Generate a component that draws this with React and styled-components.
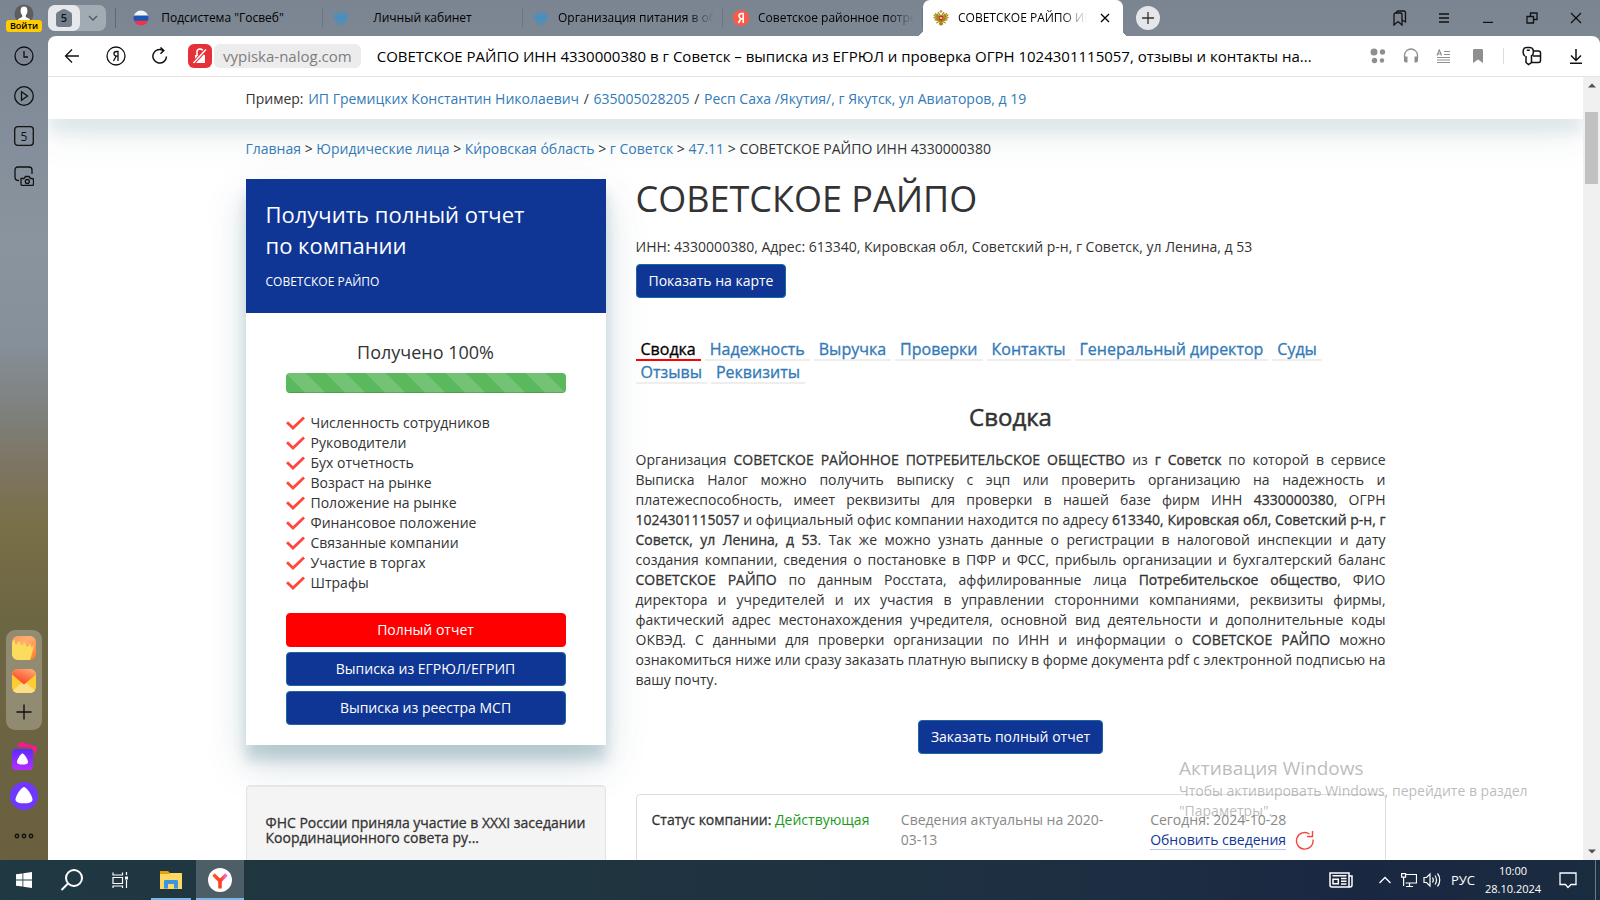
import React from 'react';
import styled, { createGlobalStyle, css } from 'styled-components';

const GlobalStyle = createGlobalStyle`
	* {
		box-sizing: border-box;
	}
	body {
		margin: 0;
		font-family: 'Open Sans', 'Noto Sans', sans-serif;
		font-size: 14px;
		line-height: 20px;
		color: #333;
		overflow: hidden;
	}
	button {
		font-family: inherit;
		padding: 0;
		border: 0;
		background: none;
		color: inherit;
		cursor: pointer;
	}
	a {
		color: #337ab7;
		text-decoration: none;
	}
	h1, h2, h3, p, ul {
		margin: 0;
		padding: 0;
	}
	svg {
		display: block;
		flex: none;
	}
`;

// the regular face thickened by a stroke, so it keeps its widths
const heavy = css`
	font-weight: 400;
	-webkit-text-stroke: thin;
`;

/* ---------- shell ---------- */

const Desktop = styled.div`
	position: relative;
	display: flex;
	flex-direction: column;
	height: 100vh;
`;

const Browser = styled.div`
	flex: 1;
	min-height: 0;
	display: flex;
	background: linear-gradient(
		#7b8591 0,
		#838d99 14%,
		#8a949f 28%,
		#86909a 40%,
		#7e8280 47%,
		#7d7563 54%,
		#796f48 61%,
		#6d6643 72%,
		#6a6040 100%
	);
`;

const SideBar = styled.aside`
	width: 48px;
	display: flex;
	flex-direction: column;
	align-items: center;
	padding: 4px 0 14px;
`;

const SideButton = styled.button`
	width: 32px;
	height: 28px;
	margin-bottom: 12px;
	display: flex;
	align-items: center;
	justify-content: center;
	color: #111;
`;

const Profile = styled.button`
	display: flex;
	flex-direction: column;
	align-items: center;
	margin-bottom: 10px;
`;

const Badge = styled.span`
	width: 36px;
	height: 12px;
	margin-top: -4px;
	border-radius: 3px;
	background: #fc0;
	color: #000;
	font-size: 9px;
	font-weight: 600;
	line-height: 12px;
`;

const SideBottom = styled.div`
	margin-top: auto;
	display: flex;
	flex-direction: column;
	align-items: center;
	gap: 12px;
`;

const Dock = styled.div`
	width: 36px;
	height: 100px;
	padding: 6px 0 8px;
	border-radius: 9px;
	background: rgba(255, 255, 255, 0.25);
	display: flex;
	flex-direction: column;
	align-items: center;
	justify-content: space-between;
`;

const DockButton = styled.button`
	display: block;
	color: #111;
`;

const MoreButton = styled.button`
	margin-top: 4px;
	color: #111;
`;

const Main = styled.div`
	flex: 1;
	min-width: 0;
	display: flex;
	flex-direction: column;
`;

/* ---------- tabs ---------- */

const TabStrip = styled.div`
	height: 36px;
	display: flex;
	align-items: center;
`;

const TabGroup = styled.div`
	display: flex;
	flex: none;
	width: 58px;
	height: 26px;
	border-radius: 7px;
	background: #a2aab4;
	margin-right: 9px;
`;

const GroupCount = styled.button`
	width: 32px;
	border-radius: 7px;
	background: #e6e8eb;
	display: flex;
	align-items: center;
	justify-content: center;
`;

const GroupMore = styled.button`
	flex: 1;
	display: flex;
	align-items: center;
	justify-content: center;
`;

const TabDivider = styled.span`
	width: 8px;
	height: 20px;
	border-left: 1px solid #5f6974;
`;

const Tab = styled.div`
	position: relative;
	width: 200px;
	height: ${(p) => (p.$active ? '36px' : '20px')};
	padding: 0 8px 0 10px;
	display: flex;
	align-items: center;
	gap: 9px;
	border-right: 1px solid ${(p) => (p.$active ? '#fff' : '#6c7681')};
	border-radius: ${(p) => (p.$active ? '7px 7px 0 0' : '0')};
	background: ${(p) => (p.$active ? '#fff' : 'none')};
	font-size: 12px;
	color: #000;
	${(p) =>
		p.$active &&
		css`
			&::before,
			&::after {
				content: '';
				position: absolute;
				bottom: 0;
				width: 7px;
				height: 7px;
				background: radial-gradient(circle at 0 0, transparent 7px, #fff 7px);
			}
			&::before {
				right: 100%;
			}
			&::after {
				left: 100%;
				transform: scaleX(-1);
			}
		`}
`;

const TabLabel = styled.span`
	flex: 1;
	min-width: 0;
	overflow: hidden;
	white-space: nowrap;
	${(p) =>
		p.$fade
			? css`
					mask-image: linear-gradient(to right, #000 calc(100% - 26px), transparent);
			  `
			: css`
					text-align: center;
					padding-right: 27px;
			  `}
`;

const NewTab = styled.button`
	width: 24px;
	height: 24px;
	margin-left: 13px;
	border-radius: 50%;
	background: #e4e6e9;
	display: flex;
	align-items: center;
	justify-content: center;
`;

const WindowButtons = styled.div`
	margin-left: auto;
	margin-right: 2px;
	display: flex;
`;

const WindowButton = styled.button`
	width: 44px;
	height: 36px;
	display: flex;
	align-items: center;
	justify-content: center;
	color: #111;
`;

/* ---------- toolbar ---------- */

const Pane = styled.div`
	flex: 1;
	min-height: 0;
	display: flex;
	flex-direction: column;
	background: #fff;
	border-radius: 8px 8px 0 0;
	overflow: hidden;
`;

const Toolbar = styled.div`
	height: 41px;
	flex: none;
	display: flex;
	align-items: center;
	padding: 0 2px;
	border-bottom: 1px solid #e3e3e3;
`;

const ToolButton = styled.button`
	width: ${(p) => p.$width || 44}px;
	height: 40px;
	flex: none;
	display: flex;
	align-items: center;
	justify-content: center;
	color: ${(p) => (p.$muted ? '#8f8f8f' : '#111')};
`;

const Security = styled.button`
	width: 24px;
	height: 24px;
	flex: none;
	margin: 0 2px 0 6px;
	border-radius: 6px;
	background: #e5323a;
	display: flex;
	align-items: center;
	justify-content: center;
`;

const Domain = styled.span`
	flex: none;
	height: 24px;
	padding: 0 9px;
	border-radius: 6px;
	background: #ececec;
	color: #7d7d7d;
	font-size: 15px;
	line-height: 24px;
`;

const PageTitle = styled.span`
	flex: 1;
	min-width: 0;
	margin-left: 16px;
	overflow: hidden;
	text-overflow: ellipsis;
	white-space: nowrap;
	color: #000;
	font-size: 15px;
	line-height: 24px;
`;

const ToolIcons = styled.div`
	margin-left: auto;
	display: flex;
	align-items: center;
`;

const ToolDivider = styled.span`
	width: 1px;
	height: 16px;
	margin: 0 6px;
	background: #ddd;
`;

/* ---------- page ---------- */

const Viewport = styled.div`
	flex: 1;
	min-height: 0;
	display: flex;
`;

const Page = styled.main`
	flex: 1;
	min-width: 0;
	overflow: hidden;
`;

const Scrollbar = styled.div`
	width: 17px;
	background: #f0f0f0;
	display: flex;
	flex-direction: column;
	align-items: center;
	padding: 6px 0;
`;

const Thumb = styled.div`
	width: 13px;
	height: 72px;
	margin: 24px 0 auto;
	background: #c1c1c1;
`;

const Container = styled.div`
	max-width: 1170px;
	margin: 0 auto;
	padding: 0 15px;
`;

const ExampleBar = styled.div`
	height: 42px;
	padding-top: 12px;
	box-shadow: 0 19px 38px rgba(0, 72, 93, 0.08), 0 15px 12px rgba(0, 72, 93, 0.07);
	a {
		margin: 0 1px;
	}
`;

const Crumbs = styled.nav`
	padding: 20px 0;
`;

const Columns = styled.div`
	display: grid;
	grid-template-columns: 360px minmax(0, 1fr);
	gap: 30px;
	align-items: start;
`;

const ReportCard = styled.section`
	margin-bottom: 40px;
	background: #fff;
	box-shadow: 0 19px 38px rgba(0, 72, 93, 0.18), 0 15px 12px rgba(0, 72, 93, 0.17);
`;

const ReportHead = styled.header`
	padding: 20px 20px 21px;
	background: #103695;
	color: #fff;
`;

const ReportTitle = styled.h2`
	font-size: 22px;
	font-weight: 400;
	line-height: 31px;
`;

const ReportName = styled.p`
	margin-top: 11px;
	font-size: 12px;
`;

const ReportBody = styled.div`
	padding: 25px 40px 20px;
`;

const Percent = styled.label`
	display: block;
	text-align: center;
	font-size: 18px;
	line-height: 28px;
`;

const Bar = styled.progress`
	appearance: none;
	display: block;
	width: 100%;
	height: 20px;
	margin: 7px 0 20px;
	border: 0;
	border-radius: 4px;
	overflow: hidden;
	&::-webkit-progress-bar {
		background: #f5f5f5;
	}
	&::-webkit-progress-value {
		background: linear-gradient(
				45deg,
				rgba(255, 255, 255, 0.15) 25%,
				transparent 25%,
				transparent 50%,
				rgba(255, 255, 255, 0.15) 50%,
				rgba(255, 255, 255, 0.15) 75%,
				transparent 75%
			)
			0 0 / 40px 40px #5cb85c;
		box-shadow: inset 0 -1px 0 rgba(0, 0, 0, 0.15);
	}
`;

const CheckList = styled.ul`
	list-style: none;
	margin-bottom: 20px;
	li {
		display: flex;
		align-items: center;
		gap: 6px;
		height: 20px;
	}
`;

const Button = styled.button`
	height: 34px;
	padding: 0 12px;
	border: 1px solid ${(p) => (p.$red ? '#f00' : '#2065a0')};
	border-radius: 4px;
	background: ${(p) => (p.$red ? '#f00' : '#103695')};
	color: #fff;
	font-size: 14px;
	line-height: 20px;
	white-space: nowrap;
`;

const ButtonStack = styled.div`
	display: grid;
	gap: 5px;
`;

const NewsCard = styled.section`
	height: 200px;
	padding: 29px 19px;
	border: 1px solid #e3e3e3;
	border-radius: 4px;
	background: #f4f4f4;
	box-shadow: inset 0 1px 1px rgba(0, 0, 0, 0.05);
`;

const NewsTitle = styled.h3`
	${heavy}
	font-size: 14px;
	line-height: 15px;
`;

const CompanyName = styled.h1`
	font-size: 36px;
	font-weight: 400;
	line-height: 40px;
`;

const Address = styled.p`
	margin: 18px 0 7px;
`;

const Anchors = styled.nav`
	display: flex;
	flex-wrap: wrap;
	column-gap: 4px;
	margin: 40px 0 20px;
`;

const Anchor = styled.a`
	${heavy}
	padding: 2px 5px 0;
	border-bottom: 2px solid ${(p) => (p.$current ? '#f00' : '#eee')};
	color: ${(p) => (p.$current ? '#000' : '#337ab7')};
	font-size: 16px;
	line-height: 19px;
`;

const SectionTitle = styled.h2`
	${heavy}
	text-align: center;
	font-size: 24px;
	line-height: 26px;
`;

const Summary = styled.p`
	margin: 20px 0 30px;
	text-align: justify;
	b {
		${heavy}
	}
`;

const Centered = styled.div`
	display: flex;
	justify-content: center;
`;

const Status = styled.section`
	height: 200px;
	margin-top: 40px;
	padding: 15px;
	border: 1px solid #ddd;
	border-radius: 4px;
	display: grid;
	grid-template-columns: repeat(3, 1fr);
	column-gap: 30px;
	color: #888;
	b {
		${heavy}
		color: #333;
	}
	em {
		color: #1a9a1a;
		font-style: normal;
	}
`;

const Refresh = styled.div`
	display: flex;
	gap: 9px;
	a {
		height: 20px;
		border-bottom: 1px solid #b9c7f0;
		color: #103695;
	}
`;

const Watermark = styled.div`
	position: absolute;
	right: 52px;
	bottom: 79px;
	width: 369px;
	color: rgba(120, 120, 120, 0.5);
	pointer-events: none;
	strong {
		display: block;
		font-size: 19px;
		font-weight: 400;
		line-height: 26px;
	}
`;

/* ---------- taskbar ---------- */

const Taskbar = styled.footer`
	height: 40px;
	flex: none;
	display: flex;
	background: linear-gradient(to right, #203841, #1f353f 35%, #1d2e42 70%, #1a2741 85%, #1a2c40);
	color: #fff;
`;

const TaskButton = styled.button`
	width: ${(p) => p.$width || 48}px;
	display: flex;
	align-items: center;
	justify-content: center;
	background: ${(p) => (p.$active ? '#4d5e67' : 'none')};
	border-bottom: 2px solid ${(p) => (p.$active || p.$open ? '#76b9ed' : 'transparent')};
	padding-top: 2px;
	${(p) => p.$open && 'margin: 0 5px 0 7px;'}
`;

const Tray = styled.div`
	margin-left: auto;
	display: flex;
	align-items: center;
`;

const TrayButton = styled.button`
	width: ${(p) => p.$width}px;
	height: 40px;
	display: flex;
	align-items: center;
	justify-content: center;
	font-size: 13px;
`;

const Clock = styled.time`
	width: 56px;
	text-align: center;
	font-size: 11px;
	line-height: 18px;
	white-space: nowrap;
`;

const ShowDesktop = styled.button`
	width: 5px;
	height: 40px;
	border-left: 1px solid #6d7886;
`;

/* ---------- icons ---------- */

const Line = ({ size = 20, w = 1.3, children, ...rest }) => (
	<svg width={size} height={size} viewBox={`0 0 ${size} ${size}`} fill="none" stroke="currentColor" strokeWidth={w} {...rest}>
		{children}
	</svg>
);

const Avatar = () => (
	<svg width="20" height="20" viewBox="0 0 20 20">
		<circle cx="10" cy="10" r="9.5" fill="#5d5d5d" />
		<ellipse cx="10" cy="7" rx="3.4" ry="4.4" fill="#fff" />
		<path d="M8.2 10h3.6v3l4 2v4H4.200v-4l4-2z" fill="#fff" />
	</svg>
);

const wing = 'M6.800 8.500L4.500 4.200M6.500 9L2.500 3.600M6.300 9.600L1.200 5M6.300 10L1 7.400M6.500 10.500L2 9.800M6.800 11L3.800 12.800M7.300 5.500L5.300 2.600';

const Eagle = ({ body, shield }) => (
	<svg width="16" height="16" viewBox="0 0 16 16">
		<g stroke={body} strokeWidth="1.3" strokeLinecap="round" fill="none">
			<path d={wing} />
			<path d={wing} transform="matrix(-1 0 0 1 16 0)" />
			<path d="M7 1.200h2M8 0.600v2" strokeWidth="1" />
		</g>
		<path d="M6.500 5h3l1 4-1 3 .8 2.200L8 15.800l-2.300-1.600.8-2.200-1-3z" fill={body} />
		{shield && <path fill={shield} d="M6.300 6h3.400v3.500L8 11 6.300 9.500z" />}
		{shield && <path fill="#fff" d="M7.300 7h1.400v2H7.300z" />}
	</svg>
);

const Flag = () => (
	<svg width="16" height="16" viewBox="0 0 16 16">
		<clipPath id="flagRound">
			<circle cx="8" cy="8" r="7.500" />
		</clipPath>
		<g clipPath="url(#flagRound)">
			<path fill="#f4f4f8" d="M0 0h16v6H0z" />
			<path fill="#1c57b5" d="M0 5.500h16v5.500H0z" />
			<path fill="#ef3348" d="M0 10.700h16V16H0z" />
		</g>
	</svg>
);

const YaRound = () => (
	<svg width="16" height="16" viewBox="0 0 16 16">
		<circle cx="8" cy="8" r="8" fill="#fc5a45" />
		<path d="M10.200 13V3.500H8.700c-1.700 0-2.700 1-2.700 2.500 0 1.300.7 2 1.800 2.700L5.400 13M8 8.800h2" fill="none" stroke="#fff" strokeWidth="1.600" />
	</svg>
);

const Check = () => (
	<svg width="19" height="14" viewBox="0 0 19 14">
		<path d="M1 6.200l6 5.800L18 1.500" fill="none" stroke="#ff473d" strokeWidth="2.800" />
	</svg>
);

const NotesIcon = () => (
	<svg width="24" height="24" viewBox="0 0 24 24">
		<defs>
			<linearGradient id="notes" x1="0" y1="0" x2="1" y2="1">
				<stop offset="0" stopColor="#ff9a5a" />
				<stop offset="0.400" stopColor="#ffb070" />
				<stop offset="1" stopColor="#ff7a2a" />
			</linearGradient>
		</defs>
		<rect width="24" height="24" rx="6" fill="url(#notes)" />
		<path
			d="M0 7l1-2.500c.8-.4 1.500-.2 2 .2C2.500 7 3 8.200 4.300 8.200S6 7 6 5.500l2.500.6C8 8 8.500 9.300 9.800 9.300s1.700-1 1.700-2.500l2.500.6c-.5 2 0 3.200 1.300 3.200S17 9.500 17 8l2 .6c-.3 1.700 0 2.700 1 2.700s1-.5 1.200-2.500c.5.3.800.8.700 1.400L18.500 23c-.2.700-.5 1-1 1H6a6 6 0 0 1-6-6z"
			fill="#fbdc5c"
		/>
	</svg>
);

const MailIcon = () => (
	<svg width="24" height="24" viewBox="0 0 24 24">
		<defs>
			<linearGradient id="flap" x1="1" y1="0" x2="0.300" y2="1">
				<stop offset="0" stopColor="#ffb27c" />
				<stop offset="1" stopColor="#fb3f1c" />
			</linearGradient>
		</defs>
		<rect width="24" height="24" rx="6" fill="#ffcc33" />
		<path d="M1 21.500L12 12l11 9.500c-1 1.600-3 2.500-5 2.500H6c-2 0-4-1-5-2.500z" fill="#ffdf85" />
		<path d="M0 5.500C.3 2.500 3 0 6 0h12c3 0 5.700 2.500 6 5.500L12 15.500z" fill="url(#flap)" />
	</svg>
);

const AlicePro = () => (
	<svg width="28" height="28" viewBox="0 0 28 28">
		<defs>
			<linearGradient id="pro" x1="0" y1="0" x2="0" y2="1">
				<stop offset="0" stopColor="#5a2cff" />
				<stop offset="1" stopColor="#b82cff" />
			</linearGradient>
		</defs>
		<path d="M7.500 5L9 1.500C9.500.3 10.500 0 12 .3l13 4c1.500.500 2.200 1.500 1.800 3L25 14c-.5-4-1.500-7.500-5-8.500z" fill="#ff1493" />
		<rect x="2" y="7" width="21" height="21" rx="4" fill="url(#pro)" />
		<path d="M12.500 11.500c1.700 0 5.500 6 5.500 8.500 0 2-2.500 2.500-5.500 2.500S7 22 7 20c0-2.500 3.800-8.500 5.500-8.500z" fill="#fff" />
	</svg>
);

const Alice = () => (
	<svg width="28" height="28" viewBox="0 0 28 28">
		<circle cx="14" cy="14" r="14" fill="#7038ff" />
		<path d="M14 5c2.500 0 8.500 8.800 8.500 12.500 0 3-4 3.800-8.500 3.800s-8.500-.8-8.500-3.800C5.500 13.800 11.500 5 14 5z" fill="#fff" />
	</svg>
);

const Folder = () => (
	<svg width="22" height="20" viewBox="0 0 22 20">
		<path d="M0 1h8l2 2h12v4H0z" fill="#e5a00d" />
		<path d="M0 4h9l2-1h11v16H0z" fill="#ffd765" />
		<path d="M4 18.500v-7c0-1 .5-1.500 1.500-1.500h11c1 0 1.500.5 1.500 1.500v7h-4V14H8v4.500z" fill="#3a96dd" />
	</svg>
);

const YandexBrowser = () => (
	<svg width="24" height="24" viewBox="0 0 24 24">
		<defs>
			<linearGradient id="yb" x1="0" y1="0" x2="1" y2="0">
				<stop offset="0" stopColor="#ff5a2a" />
				<stop offset="0.550" stopColor="#fb3f1c" />
				<stop offset="1" stopColor="#f26ee8" />
			</linearGradient>
		</defs>
		<circle cx="12" cy="12" r="12" fill="#fff" />
		<path d="M5.500 6.500L12 13v7.500M12 13l6.500-6.500" fill="none" stroke="url(#yb)" strokeWidth="3.600" strokeLinejoin="round" />
	</svg>
);

/* ---------- data ---------- */

const tabs = [
	{ icon: <Flag />, title: 'Подсистема "Госвеб"' },
	{ icon: <Eagle body="#4a90bd" />, title: 'Личный кабинет' },
	{ icon: <Eagle body="#4a90bd" />, title: 'Организация питания в общеобразовательных', fade: true },
	{ icon: <YaRound />, title: 'Советское районное потребительское', fade: true },
];

const checks = [
	'Численность сотрудников',
	'Руководители',
	'Бух отчетность',
	'Возраст на рынке',
	'Положение на рынке',
	'Финансовое положение',
	'Связанные компании',
	'Участие в торгах',
	'Штрафы',
];

const anchors = [
	'Сводка',
	'Надежность',
	'Выручка',
	'Проверки',
	'Контакты',
	'Генеральный директор',
	'Суды',
	'Отзывы',
	'Реквизиты',
];

/* ---------- parts ---------- */

const Side = () => (
	<SideBar>
		<Profile>
			<Avatar />
			<Badge>Войти</Badge>
		</Profile>
		<SideButton aria-label="История">
			<Line>
				<circle cx="10" cy="10" r="9" />
				<path d="M10 5v6h4" />
			</Line>
		</SideButton>
		<SideButton aria-label="Видео">
			<Line>
				<circle cx="10" cy="10" r="9.300" />
				<path d="M7.500 5.800v8.400l6-4.200z" />
			</Line>
		</SideButton>
		<SideButton aria-label="Вкладки">
			<Line>
				<rect x="0.700" y="0.700" width="18.600" height="18.600" rx="3" />
				<text x="10" y="14.500" textAnchor="middle" fontSize="12" fill="#111" stroke="none">
					5
				</text>
			</Line>
		</SideButton>
		<SideButton aria-label="Скриншот">
			<Line>
				<path d="M5 14.500c-3 0-4-1-4-3.500V4c0-2 1-3 3-3h11c2 0 3 1 3 3v4" />
				<path d="M7 12.500h3l1.500-2h3.500l1.500 2H18c1 0 1.500.5 1.500 1.500v4c0 1-.5 1.500-1.500 1.500H8.500c-1 0-1.500-.5-1.500-1.500z" />
				<circle cx="13.300" cy="15.500" r="2" />
			</Line>
		</SideButton>
		<SideBottom>
			<Dock>
				<DockButton aria-label="Заметки">
					<NotesIcon />
				</DockButton>
				<DockButton aria-label="Почта">
					<MailIcon />
				</DockButton>
				<DockButton aria-label="Добавить">
					<Line w={1.400}>
						<path d="M10 2.500v15M2.500 10h15" />
					</Line>
				</DockButton>
			</Dock>
			<DockButton aria-label="Алиса Про">
				<AlicePro />
			</DockButton>
			<DockButton aria-label="Алиса">
				<Alice />
			</DockButton>
			<MoreButton aria-label="Ещё">
				<Line w={1.400}>
					<circle cx="3" cy="10" r="1.700" />
					<circle cx="10" cy="10" r="1.700" />
					<circle cx="17" cy="10" r="1.700" />
				</Line>
			</MoreButton>
		</SideBottom>
	</SideBar>
);

const TabItem = ({ icon, title, fade }) => (
	<Tab>
		{icon}
		<TabLabel $fade={fade}>{title}</TabLabel>
	</Tab>
);

const Tabs = () => (
	<TabStrip>
		<TabGroup>
			<GroupCount aria-label="Группа вкладок">
				<svg width="18" height="20" viewBox="0 0 18 20">
					<path d="M1 7c0-1.500.5-2.300 1.700-3L7 1.500c1.300-.7 2.700-.7 4 0L15.300 4C16.500 4.700 17 5.500 17 7v9c0 2-1 3-3 3H4c-2 0-3-1-3-3z" fill="#737e8a" />
					<text x="9" y="14" textAnchor="middle" fontSize="11" fontWeight="600" fill="#111">
						5
					</text>
				</svg>
			</GroupCount>
			<GroupMore aria-label="Список групп">
				<Line size={10} stroke="#4e565f">
					<path d="M1 3l4 4 4-4" />
				</Line>
			</GroupMore>
		</TabGroup>
		<TabDivider />
		{tabs.map((tab) => (
			<TabItem key={tab.title} {...tab} />
		))}
		<Tab $active>
			<Eagle body="#a88a1c" shield="#c22" />
			<TabLabel $fade>СОВЕТСКОЕ РАЙПО ИНН 4330000380</TabLabel>
			<Line size={18}>
				<path d="M5 5l8 8M13 5l-8 8" />
			</Line>
		</Tab>
		<NewTab aria-label="Новая вкладка">
			<Line size={12}>
				<path d="M6 0v12M0 6h12" />
			</Line>
		</NewTab>
		<WindowButtons>
			<WindowButton aria-label="Коллекции">
				<Line size={16}>
					<path d="M2 4.500C2 3.500 2.500 3 3.500 3h5c1 0 1.500.500 1.500 1.500V15l-4-3.500L2 15z" />
					<path d="M4.500 3c0-1.300.5-2 1.800-2h5.400c1.200 0 1.800.700 1.800 1.800V12L10 10" />
				</Line>
			</WindowButton>
			<WindowButton aria-label="Меню">
				<Line size={10}>
					<path d="M0 1h10M0 5h10M0 9h10" />
				</Line>
			</WindowButton>
			<WindowButton aria-label="Свернуть">
				<Line size={10}>
					<path d="M0 9.400h10" />
				</Line>
			</WindowButton>
			<WindowButton aria-label="Развернуть">
				<Line size={12}>
					<path d="M1 4.500h6.500V11H1zM4.500 4.500V1H11v6.500H7.500" />
				</Line>
			</WindowButton>
			<WindowButton aria-label="Закрыть">
				<Line size={12}>
					<path d="M1 1l10 10M11 1L1 11" />
				</Line>
			</WindowButton>
		</WindowButtons>
	</TabStrip>
);

const AddressBar = () => (
	<Toolbar>
		<ToolButton aria-label="Назад">
			<Line size={16}>
				<path d="M15 8H1.500M8 1.500L1.500 8 8 14.500" />
			</Line>
		</ToolButton>
		<ToolButton aria-label="Яндекс">
			<Line size={20}>
				<circle cx="10" cy="10" r="9" />
				<path d="M12 15V5.500h-1.500c-1.700 0-2.600.9-2.600 2.300 0 1.500.9 2 2 2.400H12M10 10.500L7.500 15" />
			</Line>
		</ToolButton>
		<ToolButton aria-label="Обновить">
			<Line size={18} w={1.500}>
				<path d="M15.500 9.500a6.800 6.800 0 1 1-3.200-6M9.500 0.500l3.300 3-3.300 3.300" />
			</Line>
		</ToolButton>
		<Security aria-label="Соединение не защищено">
			<svg width="16" height="18" viewBox="0 0 16 18">
				<path d="M3 8h10v8H3z" fill="#fff" />
				<path d="M5 8V5c0-4 6-4 6 0v3" fill="none" stroke="#fff" strokeWidth="1.500" />
				<path d="M1.500 16L13.500 3" stroke="#e5323a" strokeWidth="3.500" />
				<path d="M1.500 16L14 2.500" stroke="#fff" strokeWidth="1.400" />
			</svg>
		</Security>
		<Domain>vypiska-nalog.com</Domain>
		<PageTitle>
			СОВЕТСКОЕ РАЙПО ИНН 4330000380 в г Советск – выписка из ЕГРЮЛ и проверка ОГРН 1024301115057, отзывы и контакты на...
		</PageTitle>
		<ToolIcons>
			<ToolButton $width={34} $muted aria-label="Расширения">
				<svg width="16" height="16" viewBox="0 0 16 16" fill="currentColor">
					<circle cx="4" cy="4" r="3.500" />
					<circle cx="12.500" cy="4" r="2.700" />
					<circle cx="4.500" cy="12.500" r="2.700" />
					<circle cx="12" cy="12.500" r="2.200" />
				</svg>
			</ToolButton>
			<ToolButton $width={32} $muted aria-label="Слушать">
				<Line size={16}>
					<path d="M1.500 10V7.500a6.500 6.500 0 0 1 13 0V10" />
					<path d="M1 8.500h3.500v6H3c-1.500 0-2-1-2-2zM15 8.500h-3.500v6H13c1.500 0 2-1 2-2z" fill="currentColor" stroke="none" />
				</Line>
			</ToolButton>
			<ToolButton $width={32} $muted aria-label="Режим чтения">
				<Line size={14} w={1.200}>
					<path d="M8 2.500h6M8 5.500h6M1 8.500h13M1 11h13M1 13.500h13" />
					<path d="M1 6.500L3.300 1l2.300 5.500M1.700 5h3.200" />
				</Line>
			</ToolButton>
			<ToolButton $width={38} $muted aria-label="В закладки">
				<svg width="12" height="16" viewBox="0 0 12 16" fill="currentColor">
					<path d="M1 2.500C1 1.500 1.500 1 2.500 1h7c1 0 1.500.5 1.500 1.500V15l-5-3.500L1 15z" />
				</svg>
			</ToolButton>
			<ToolDivider />
			<ToolButton aria-label="Пароли">
				<Line size={20} w={1.500}>
					<path d="M3 10C0.500 8.500 1 5.500 1.500 3.500 2 2 3 1.500 5 1.500h2.500c2 0 3 .5 3.500 2 .5 2 1 5-1.500 6.500v6.500L6.500 18.500 4 16.500V10M4.800 4.200h3" />
					<path d="M11 5h5.500c1.500 0 2 .700 2 2v7.500c0 1.300-.5 2-2 2H10M11 10h7.500" />
				</Line>
			</ToolButton>
			<ToolButton aria-label="Загрузки">
				<Line size={16} w={1.500}>
					<path d="M8 1v11M3 7.500L8 12.500l5-5M2 15.200h12" />
				</Line>
			</ToolButton>
		</ToolIcons>
	</Toolbar>
);

const Report = () => (
	<ReportCard>
		<ReportHead>
			<ReportTitle>
				Получить полный отчет
				<br />
				по компании
			</ReportTitle>
			<ReportName>СОВЕТСКОЕ РАЙПО</ReportName>
		</ReportHead>
		<ReportBody>
			<Percent htmlFor="ready">Получено 100%</Percent>
			<Bar id="ready" value="100" max="100" />
			<CheckList>
				{checks.map((item) => (
					<li key={item}>
						<Check />
						{item}
					</li>
				))}
			</CheckList>
			<ButtonStack>
				<Button $red>Полный отчет</Button>
				<Button>Выписка из ЕГРЮЛ/ЕГРИП</Button>
				<Button>Выписка из реестра МСП</Button>
			</ButtonStack>
		</ReportBody>
	</ReportCard>
);

const Company = () => (
	<article>
		<CompanyName>СОВЕТСКОЕ РАЙПО</CompanyName>
		<Address>ИНН: 4330000380, Адрес: 613340, Кировская обл, Советский р-н, г Советск, ул Ленина, д 53</Address>
		<Button>Показать на карте</Button>
		<Anchors>
			{anchors.map((name, i) => (
				<Anchor key={name} href="#" $current={i === 0}>
					{name}
				</Anchor>
			))}
		</Anchors>
		<SectionTitle>Сводка</SectionTitle>
		<Summary>
			Организация <b>СОВЕТСКОЕ РАЙОННОЕ ПОТРЕБИТЕЛЬСКОЕ ОБЩЕСТВО</b> из <b>г Советск</b> по которой в сервисе
			Выписка Налог можно получить выписку с эцп или проверить организацию на надежность и
			платежеспособность, имеет реквизиты для проверки в нашей базе фирм ИНН <b>4330000380</b>, ОГРН{' '}
			<b>1024301115057</b> и официальный офис компании находится по адресу{' '}
			<b>613340, Кировская обл, Советский р-н, г Советск, ул Ленина, д 53</b>. Так же можно узнать данные о
			регистрации в налоговой инспекции и дату создания компании, сведения о постановке в ПФР и ФСС, прибыль
			организации и бухгалтерский баланс <b>СОВЕТСКОЕ РАЙПО</b> по данным Росстата, аффилированные лица{' '}
			<b>Потребительское общество</b>, ФИО директора и учредителей и их участия в управлении сторонними
			компаниями, реквизиты фирмы, фактический адрес местонахождения учредителя, основной вид деятельности и
			дополнительные коды ОКВЭД. С данными для проверки организации по ИНН и информации о{' '}
			<b>СОВЕТСКОЕ РАЙПО</b> можно ознакомиться ниже или сразу заказать платную выписку в форме документа pdf
			с электронной подписью на вашу почту.
		</Summary>
		<Centered>
			<Button>Заказать полный отчет</Button>
		</Centered>
		<Status>
			<div>
				<b>Статус компании:</b> <em>Действующая</em>
			</div>
			<div>Сведения актуальны на 2020-03-13</div>
			<div>
				Сегодня: 2024-10-28
				<Refresh>
					<a href="#">Обновить сведения</a>
					<Line size={20} w={1.400} stroke="#f2473d">
						<path d="M18 9.500A8.300 8.300 0 1 1 14.500 4M17.500 1v5.500H12" />
					</Line>
				</Refresh>
			</div>
		</Status>
	</article>
);

const System = () => (
	<Taskbar>
		<TaskButton aria-label="Пуск">
			<svg width="16" height="16" viewBox="0 0 16 16" fill="#fff">
				<path d="M0 2.300L6.500 1.400v6.200H0zM7.300 1.300L16 0v7.600H7.300zM0 8.400h6.500v6.200L0 13.700zM7.300 8.400H16V16l-8.700-1.300z" />
			</svg>
		</TaskButton>
		<TaskButton aria-label="Поиск">
			<Line size={24} w={2}>
				<circle cx="14" cy="10" r="8" />
				<path d="M8 15.500L1.500 22" />
			</Line>
		</TaskButton>
		<TaskButton aria-label="Представление задач">
			<Line size={16} w={1.200}>
				<path d="M1 .5v2.500h9.500V.5M1 5.500h9.500v6H1zM1 16v-2h9.500v2M14.500 0v3M14.500 8v8" />
				<path d="M13 4.500h3v3h-3z" fill="currentColor" stroke="none" />
			</Line>
		</TaskButton>
		<TaskButton $open $width={40} aria-label="Проводник">
			<Folder />
		</TaskButton>
		<TaskButton $active aria-label="Яндекс Браузер">
			<YandexBrowser />
		</TaskButton>
		<Tray>
			<TrayButton $width={68} aria-label="Новости">
				<svg width="24" height="16" viewBox="0 0 24 16" fill="none" stroke="#fff" strokeWidth="1.500">
					<path d="M1 1h19v14H3c-1.500 0-2-.5-2-2zM20 4h3v9c0 1.500-.5 2-2 2h-3M3.500 3.800h14M12 6.500h5.500M12 9.300h5.500M12 12h5.500M4 7.200h5.300v4.600H4z" />
				</svg>
			</TrayButton>
			<TrayButton $width={20} aria-label="Скрытые значки">
				<Line size={12} w={1.300}>
					<path d="M0.500 9L6 3.500 11.500 9" />
				</Line>
			</TrayButton>
			<TrayButton $width={28} aria-label="Сеть">
				<Line size={16} w={1.200}>
					<path d="M5 2.500h10.500v8.500H4.500M8.500 11v3.500M5 14.500h7M.6 1.600h4v3.500h-4zM2.600 5v9" />
				</Line>
			</TrayButton>
			<TrayButton $width={18} aria-label="Громкость">
				<Line size={18} w={1.200}>
					<path d="M1 6.500h2.500L7 3v12l-3.500-3.500H1zM9.500 6.500c1 1.500 1 3.500 0 5M12 4.500c2 2.500 2 6.500 0 9M14.500 2.500c3 3.500 3 9.500 0 13" />
				</Line>
			</TrayButton>
			<TrayButton $width={44}>РУС</TrayButton>
			<Clock>
				10:00
				<br />
				28.10.2024
			</Clock>
			<TrayButton $width={54} aria-label="Уведомления">
				<Line size={18} w={1.300}>
					<path d="M1 2h16v11.500h-5L9 16.500l-2.500-3H1z" />
				</Line>
			</TrayButton>
			<ShowDesktop aria-label="Свернуть все окна" />
		</Tray>
	</Taskbar>
);

const App = () => (
	<Desktop>
		<GlobalStyle />
		<Browser>
			<Side />
			<Main>
				<Tabs />
				<Pane>
					<AddressBar />
					<Viewport>
						<Page>
							<ExampleBar>
								<Container>
									Пример: <a href="#">ИП Гремицких Константин Николаевич</a> / <a href="#">635005028205</a> /{' '}
									<a href="#">Респ Саха /Якутия/, г Якутск, ул Авиаторов, д 19</a>
								</Container>
							</ExampleBar>
							<Container>
								<Crumbs>
									<a href="#">Главная</a> &gt; <a href="#">Юридические лица</a> &gt;{' '}
									<a href="#">Ки́ровская о́бласть</a> &gt; <a href="#">г Советск</a> &gt; <a href="#">47.11</a> &gt;
									СОВЕТСКОЕ РАЙПО ИНН 4330000380
								</Crumbs>
								<Columns>
									<aside>
										<Report />
										<NewsCard>
											<NewsTitle>ФНС России приняла участие в XXXI заседании Координационного совета ру...</NewsTitle>
										</NewsCard>
									</aside>
									<Company />
								</Columns>
							</Container>
						</Page>
						<Scrollbar>
							<svg width="8" height="5" viewBox="0 0 8 5">
								<path d="M0 4.500L4 .5l4 4z" fill="#505050" />
							</svg>
							<Thumb />
							<svg width="8" height="5" viewBox="0 0 8 5">
								<path d="M0 .5l4 4 4-4z" fill="#505050" />
							</svg>
						</Scrollbar>
					</Viewport>
				</Pane>
			</Main>
		</Browser>
		<System />
		<Watermark>
			<strong>Активация Windows</strong>
			Чтобы активировать Windows, перейдите в раздел "Параметры".
		</Watermark>
	</Desktop>
);

export default App;
